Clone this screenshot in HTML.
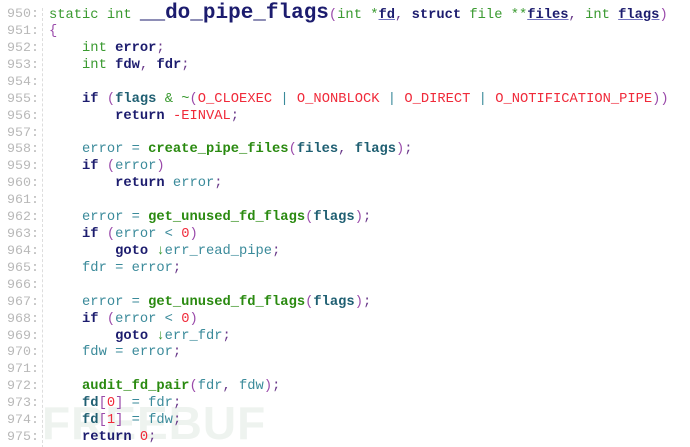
<!DOCTYPE html>
<html><head><meta charset="utf-8"><style>
html,body{margin:0;padding:0;background:#fff;width:690px;height:447px;overflow:hidden;position:relative}
.r0{position:absolute;left:0;width:690px;height:17px}
.ln{position:absolute;left:7px;top:-1px;font-family:"Liberation Mono",monospace;font-size:13.3px;color:#b8b8b8;white-space:pre}
.bar{position:absolute;left:42px;top:8px;width:0;height:440px;border-left:1px dashed #ddd}
.c{position:absolute;left:49px;top:0;font-family:"Liberation Mono",monospace;font-size:13.77px;white-space:pre;color:#3a8a9a}
.k{color:#1c1c6e;font-weight:bold}
.t{color:#3a9a30}
.f{color:#2a8a10;font-weight:bold}
.p{color:#9a4aaa}
.r{color:#f02a3a}
.v{color:#3a8a9a}
.b{color:#1f5f72;font-weight:bold}
.u{color:#1c1c6e;font-weight:bold;text-decoration:underline;text-decoration-color:#7070c0}
.big{font-size:21px;font-weight:bold;color:#1c1c6e}
.s{color:#6a3a8a}
.wm{position:absolute;left:42px;top:396px;font-family:"Liberation Sans",sans-serif;font-weight:bold;font-size:46px;color:#eef3ef;letter-spacing:1px}
</style></head><body>
<div class="bar"></div>
<div class="wm">FREEBUF</div>
<div class="r0" style="top:2px"><div class="ln" style="top:4px">950:</div><div class="c"><span class="t">static int </span><span class="big">__do_pipe_flags</span><span class="p">(</span><span class="t">int</span> <span class="t">*</span><span class="u">fd</span><span class="s">,</span> <span class="k">struct</span> <span class="t">file **</span><span class="u">files</span><span class="s">,</span> <span class="t">int</span> <span class="u">flags</span><span class="p">)</span></div></div>
<div class="r0" style="top:24px"><div class="ln">951:</div><div class="c"><span class="p">{</span></div></div>
<div class="r0" style="top:40.9px"><div class="ln">952:</div><div class="c">    <span class="t">int</span> <span class="k">error</span><span class="s">;</span></div></div>
<div class="r0" style="top:57.8px"><div class="ln">953:</div><div class="c">    <span class="t">int</span> <span class="k">fdw</span><span class="s">,</span> <span class="k">fdr</span><span class="s">;</span></div></div>
<div class="r0" style="top:74.8px"><div class="ln">954:</div></div>
<div class="r0" style="top:91.7px"><div class="ln">955:</div><div class="c">    <span class="k">if</span> <span class="p">(</span><span class="b">flags</span> <span class="t">&amp;</span> <span class="t">~</span><span class="p">(</span><span class="r">O_CLOEXEC</span> <span class="v">|</span> <span class="r">O_NONBLOCK</span> <span class="v">|</span> <span class="r">O_DIRECT</span> <span class="v">|</span> <span class="r">O_NOTIFICATION_PIPE</span><span class="p">))</span></div></div>
<div class="r0" style="top:108.6px"><div class="ln">956:</div><div class="c">        <span class="k">return</span> <span class="r">-EINVAL</span><span class="s">;</span></div></div>
<div class="r0" style="top:125.5px"><div class="ln">957:</div></div>
<div class="r0" style="top:142.4px"><div class="ln">958:</div><div class="c">    error = <span class="f">create_pipe_files</span><span class="p">(</span><span class="b">files</span><span class="s">,</span> <span class="b">flags</span><span class="p">)</span><span class="s">;</span></div></div>
<div class="r0" style="top:159.3px"><div class="ln">959:</div><div class="c">    <span class="k">if</span> <span class="p">(</span>error<span class="p">)</span></div></div>
<div class="r0" style="top:176.2px"><div class="ln">960:</div><div class="c">        <span class="k">return</span> error<span class="s">;</span></div></div>
<div class="r0" style="top:193.2px"><div class="ln">961:</div></div>
<div class="r0" style="top:210.1px"><div class="ln">962:</div><div class="c">    error = <span class="f">get_unused_fd_flags</span><span class="p">(</span><span class="b">flags</span><span class="p">)</span><span class="s">;</span></div></div>
<div class="r0" style="top:227px"><div class="ln">963:</div><div class="c">    <span class="k">if</span> <span class="p">(</span>error &lt; <span class="r">0</span><span class="p">)</span></div></div>
<div class="r0" style="top:243.9px"><div class="ln">964:</div><div class="c">        <span class="k">goto</span> <span class="t">↓</span>err_read_pipe<span class="s">;</span></div></div>
<div class="r0" style="top:260.8px"><div class="ln">965:</div><div class="c">    fdr = error<span class="s">;</span></div></div>
<div class="r0" style="top:277.7px"><div class="ln">966:</div></div>
<div class="r0" style="top:294.6px"><div class="ln">967:</div><div class="c">    error = <span class="f">get_unused_fd_flags</span><span class="p">(</span><span class="b">flags</span><span class="p">)</span><span class="s">;</span></div></div>
<div class="r0" style="top:311.6px"><div class="ln">968:</div><div class="c">    <span class="k">if</span> <span class="p">(</span>error &lt; <span class="r">0</span><span class="p">)</span></div></div>
<div class="r0" style="top:328.5px"><div class="ln">969:</div><div class="c">        <span class="k">goto</span> <span class="t">↓</span>err_fdr<span class="s">;</span></div></div>
<div class="r0" style="top:345.4px"><div class="ln">970:</div><div class="c">    fdw = error<span class="s">;</span></div></div>
<div class="r0" style="top:362.3px"><div class="ln">971:</div></div>
<div class="r0" style="top:379.2px"><div class="ln">972:</div><div class="c">    <span class="f">audit_fd_pair</span><span class="p">(</span>fdr<span class="s">,</span> fdw<span class="p">)</span><span class="s">;</span></div></div>
<div class="r0" style="top:396.1px"><div class="ln">973:</div><div class="c">    <span class="b">fd</span><span class="p">[</span><span class="r">0</span><span class="p">]</span> = fdr<span class="s">;</span></div></div>
<div class="r0" style="top:413px"><div class="ln">974:</div><div class="c">    <span class="b">fd</span><span class="p">[</span><span class="r">1</span><span class="p">]</span> = fdw<span class="s">;</span></div></div>
<div class="r0" style="top:430px"><div class="ln">975:</div><div class="c">    <span class="k">return</span> <span class="r">0</span><span class="s">;</span></div></div>
</body></html>
